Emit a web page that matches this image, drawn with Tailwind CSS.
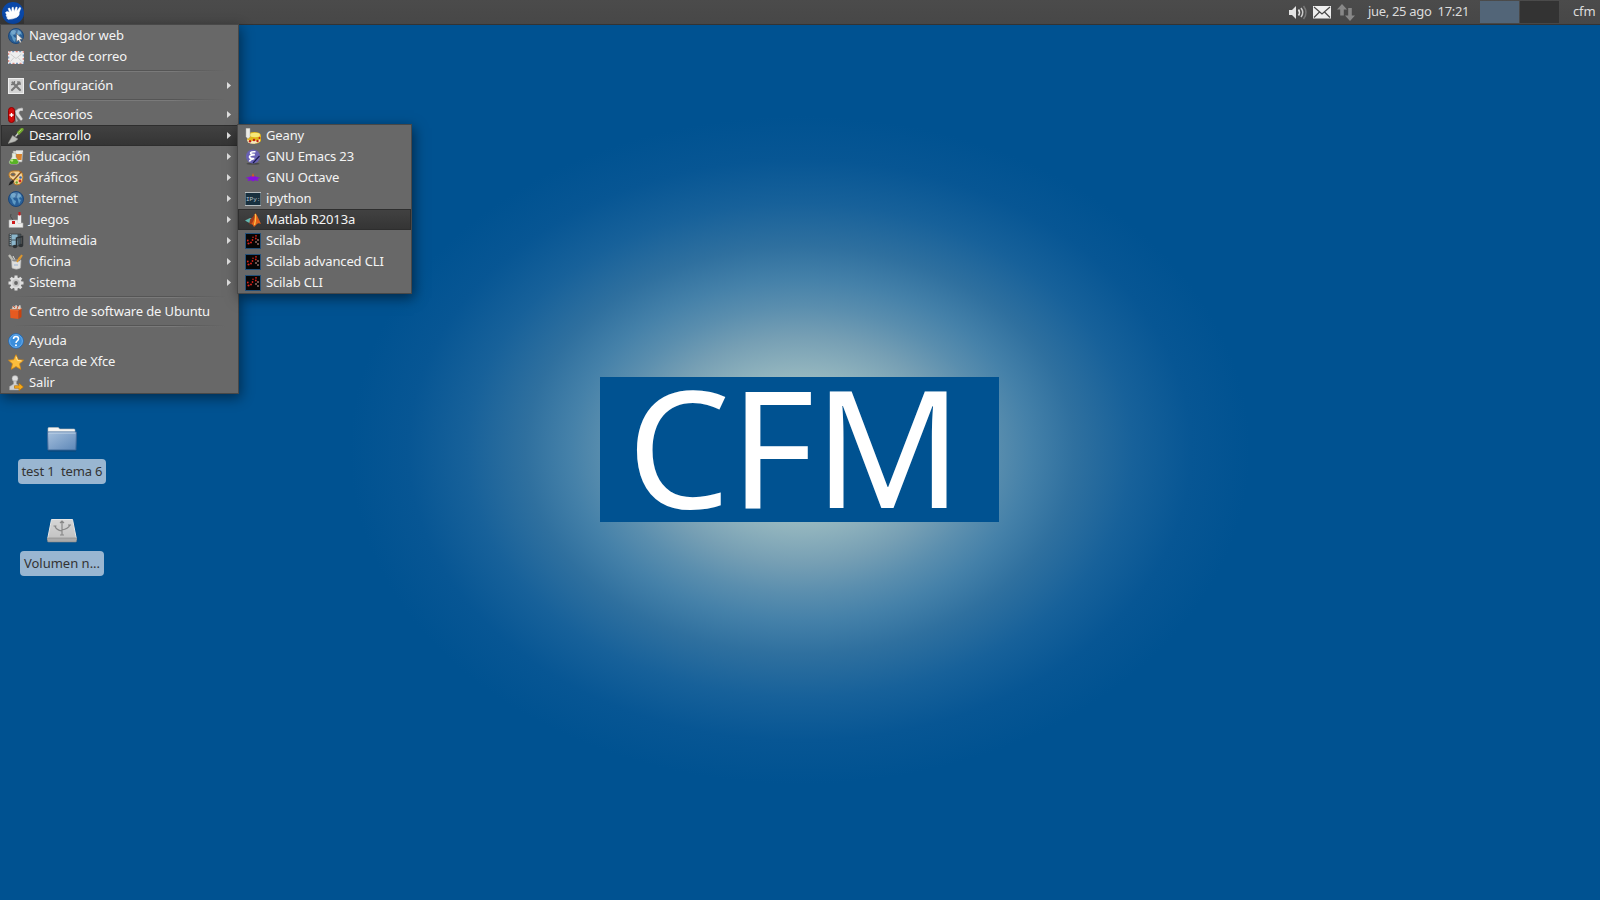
<!DOCTYPE html>
<html lang="es">
<head>
<meta charset="utf-8">
<title>Escritorio</title>
<script src="https://cdn.jsdelivr.net/npm/@tailwindcss/browser@4"></script>
</head>
<body class="relative h-[900px] w-[1600px] overflow-hidden bg-[#005291] font-['Noto_Sans','Open_Sans',sans-serif] text-[13px] tracking-[-0.14px] text-[#f4f4f4]">
<div class="absolute inset-0 bg-[radial-gradient(ellipse_450px_334px_at_800px_450px,#a6c2c2_0%,#98b9c0_21%,#769fb4_34%,#5a8eae_43%,#4581a9_51%,#2f709f_61%,#17619a_74%,#075694_87%,#005291_100%)]"></div>
<main class="absolute left-[600px] top-[377px] h-[145px] w-[399px] bg-[#005291] text-white">
  <div class="absolute left-[27px] top-[-44px] whitespace-nowrap text-[163.500px] leading-[224px] tracking-[-0.6px]">CFM</div>
</main>

<!-- Iconos del escritorio -->
<section class="absolute left-0 top-[420px] flex w-[124px] flex-col items-center text-[#333]">
  <svg class="h-[36px] w-[32px]" viewBox="0 0 32 36"><defs><linearGradient id="fo" x1="0" y1="0" x2="1" y2="1"><stop stop-color="#a5bfdc"/><stop offset="1" stop-color="#5d87b8"/></linearGradient><linearGradient id="dr" x1="0" y1="0" x2="0" y2="1"><stop stop-color="#d6d6d6"/><stop offset="1" stop-color="#c2c2c2"/></linearGradient></defs><path d="M2 14V8.500q0-1 1-1h9q1 0 1.500 1.500h14.500q1 0 1 1V14z" fill="#f4f4f2" stroke="#bbb" stroke-width=".6"/><path d="M1.500 12h29l-.6 18H2z" fill="url(#fo)" stroke="#416a9b" stroke-width="1"/><path d="M2.500 13h27" stroke="#c4d5e8"/><path d="M2 31h28" stroke="#123d66" opacity=".6"/></svg>
  <div class="mt-[3px] flex h-[25px] w-[88px] items-center justify-center whitespace-pre rounded-[4px] bg-[#99b6d1]">test 1  tema 6</div>
  <svg class="mt-[31px] h-[36px] w-[32px]" viewBox="0 0 32 36"><path d="M5.500 4.500h21l4 20H1.500z" fill="url(#dr)" stroke="#e6e6e6"/><path d="M1.500 23h29v3q0 1-1 1h-27q-1 0-1-1z" fill="#aaa" stroke="#888" stroke-width=".6"/><g fill="none" stroke="#888" stroke-width="1.200"><path d="M16 20V7M16 16q-6-1-7-5M16 15q6-1 8-5M14 8l2-2 2 2M14 20h4M7.500 11h3M22 10h3"/></g></svg>
  <div class="flex h-[25px] w-[84px] items-center justify-center rounded-[4px] bg-[#99b6d1] tracking-normal">Volumen n...</div>
</section>

<!-- Panel superior -->
<header class="absolute inset-x-0 top-0 flex h-[25px] items-start border-b border-[#333] bg-linear-to-b from-[#4b4b4b] to-[#474747] text-[#dcdcdc]">
  <div class="flex h-6 w-6 items-center justify-center bg-[#383838]"><svg class="ml-[2px] mt-[2px] h-[22px] w-[22px]" viewBox="0 0 22 22"><circle cx="11" cy="11" r="11" fill="#0a48a8"/><path d="M3.500 10.500L5 9.500l2.500.8L6.200 6.500 7.500 6l2.300 4L10 5.500l1.300-.3.900 4.300L14 5l1.200.3L14.800 9l3-3.800 1 .8-1.600 4.500Q18 13.500 14.500 15.500 10 17.500 6 17.300L4.800 16l.7-1-1.500-1 .6-1.200z" fill="#fff" stroke="#fff" stroke-width=".5" stroke-linejoin="round"/></svg></div>
  <div class="flex-1"></div>
  <svg class="mt-[4px] h-[17px] w-[68px]" viewBox="0 0 68 17"><path d="M1 6h3l4-4v13l-4-4H1z" fill="#e4e4e4"/><g fill="none" stroke-width="1.600"><path d="M10.500 5.500q2 3 0 6" stroke="#e4e4e4"/><path d="M13 4q3.500 4.500 0 9" stroke="#ccc"/><path d="M15.500 2q5 6.500 0 13" stroke="#777"/></g><rect x="25" y="2" width="18" height="12.500" fill="#eee"/><path d="M26 3l8 7 8-7M26 13.500l5.500-5.500M42 13.500l-5.500-5.500" fill="none" stroke="#484848" stroke-width="1.200"/><path d="M54 0l5 5.500h-3.200v6h-3.600v-6H49zM62 17l5-5.500h-3.200V4h-3.600v7.500H57z" fill="#888"/></svg>
  <div class="ml-[12px] h-[23px] w-[112px] whitespace-pre leading-[23px] tracking-[-0.32px]">jue, 25 ago  17:21</div>
  <div class="mt-px h-[22px] w-[39px] bg-[#526578]"></div><div class="ml-px mt-px h-[22px] w-[39px] bg-[#333]"></div>
  <div class="ml-[14px] w-[27px] leading-[23px]">cfm</div>
</header>

<!-- Menú principal -->
<nav id="menu" class="absolute left-0 top-6 w-[239px] border border-[#484848] bg-[#686868] shadow-[2px_4px_12px_rgba(0,0,0,0.45)]"></nav>
<nav id="submenu" class="absolute left-[237px] top-[124px] w-[175px] border border-[#484848] bg-[#686868] shadow-[2px_4px_12px_rgba(0,0,0,0.5)]"></nav>

<script>
const globe='<circle cx="8" cy="8" r="7.500" fill="#2a6098" stroke="#1c4677"/><path d="M3 3q3-2 5 0L7 6 5 7l1 2 2 1-1 4q-3-2-3-5L2 6zM10 2l3 2 1 3-2-1-1 2 2 1-2 4-1-4-1-3z" fill="#5f9ac4"/><ellipse cx="8" cy="4" rx="5" ry="3" fill="#fff" opacity=".14"/>';
const scilab='<rect x=".5" y=".5" width="15" height="15" fill="#050505" stroke="#245078"/><g fill="#d8221a"><circle cx="2.800" cy="7.500" r=".9"/><circle cx="3.500" cy="10.500" r="1.100"/><circle cx="6" cy="9.500" r="1"/><circle cx="7.500" cy="7" r=".9"/><circle cx="8" cy="4.200" r=".8"/><circle cx="11" cy="2.800" r=".9"/><circle cx="10.800" cy="5.500" r=".9"/></g><g fill="#f0b0a4"><circle cx="13" cy="7" r=".8"/><circle cx="11" cy="9" r=".8"/><circle cx="13" cy="11" r=".8"/></g>';
const I={
web:globe+'<path d="M8.500 5.500v8.500l2-2 1.500 3 1.500-.7-1.500-3h2.800z" fill="#eee" stroke="#555" stroke-width=".5"/>',
mail:'<rect x=".7" y="2.700" width="14.600" height="11.600" fill="#eee" stroke="#fff"/><rect x=".7" y="2.700" width="14.600" height="11.600" fill="none" stroke="#d98880" stroke-width="1.200" stroke-dasharray="2 5"/><rect x=".7" y="2.700" width="14.600" height="11.600" fill="none" stroke="#7b96bc" stroke-width="1.200" stroke-dasharray="2 5" stroke-dashoffset="3.500"/><path d="M2.500 5L8 9.500 13.500 5M2.500 12.500L6 8.500M13.500 12.500L10 8.500" fill="none" stroke="#c4c4c4" stroke-width=".8"/>',
config:'<rect x=".5" y=".5" width="15" height="15" fill="#d4d4d4" stroke="#eee"/><path d="M4.500 4.500L12 12M11.500 4.500L4 12" stroke="#777" stroke-width="2.200" stroke-linecap="round"/><path d="M3 6.500l3.300-.2.200-3.300M10 3v3h3" stroke="#777" stroke-width="1.300" fill="none"/>',
acc:'<path d="M7 4q4-4 8-3v3h-3l-1 2 4 6-2 2-5-6z" fill="#dedede" stroke="#777" stroke-width=".5"/><path d="M7 8l3 6-2 1z" fill="#aaa"/><rect x=".5" y=".5" width="6" height="15" rx="3" fill="#d40b0b" stroke="#8e0000"/><path d="M3.500 6v4M1.500 8h4" stroke="#fff" stroke-width="1.300"/>',
dev:'<path d="M10.500 5L14 1.500" stroke="#73a82f" stroke-width="3.200" stroke-linecap="round"/><path d="M10.500 4.500L13.500 1.500" stroke="#aad568"/><path d="M7.500 8.500l2.500-3" stroke="#ccc" stroke-width="1.300"/><path d="M4.500 7.500l5.500 3.500-3 2.500L0 15.500z" fill="#bbbcb8" stroke="#8a8a86" stroke-width=".5"/>',
edu:'<path d="M5 2h10l-1 11H6z" fill="#e9e9e4" stroke="#999" stroke-width=".6"/><path d="M8 5h6l-.5 6H8z" fill="#d9822b"/><path d="M8 2h7" stroke="#fff"/><path d="M4 4h4v4l3 5q0 2-2 2.300H3Q1 15 1 13l3-5z" fill="#e6eee0" stroke="#888" stroke-width=".5"/><path d="M3.500 10h5l2 3q0 2-2 2h-5q-2 0-2-2z" fill="#58b226"/><circle cx="4" cy="11.500" r="1.200" fill="#b5e77c"/>',
gfx:'<path d="M1 5q0-4 5-4h5q4 1 4 6t-3 7q-5 2-6-1 0-3-2-4-3-1-3-4z" fill="#f3d49c" stroke="#c07a1e"/><ellipse cx="5" cy="4.500" rx="2.400" ry="1.700" fill="#686868" stroke="#c07a1e" stroke-width=".7"/><circle cx="12.500" cy="7.500" r="1.300" fill="#3668ad"/><circle cx="12" cy="11" r="1.400" fill="#cf2b22"/><circle cx="8.700" cy="12.500" r="1.200" fill="#68a32d"/><circle cx="9" cy="9.500" r="1" fill="#e3d220"/><path d="M4.500 11.500L13.500 1.500" stroke="#8a5626" stroke-width="1.400"/><path d="M5 10l-3 2-1.500 3.500 3.500-1.500 2-2.500z" fill="#222"/>',
net:globe,
games:'<path d="M1 8h9v3h5v4.500H1z" fill="#ececea" stroke="#aaa" stroke-width=".6"/><path d="M11.500 11V3" stroke="#eee" stroke-width="3.400"/><rect x="10.500" y="0" width="2" height="3.500" fill="#cf1919"/><rect x="4" y="9" width="3" height="3" fill="#cf1919"/><path d="M5 8Q1 4 3 2" stroke="#444" stroke-width=".8" fill="none"/>',
media:'<path d="M1 1h12v12H1z" fill="#45535b" stroke="#333" stroke-width=".6"/><path d="M3.500 1.500h6v5h-6zM3.500 7.500h6v5h-6z" fill="#8db7cc"/><path d="M2.300 1v12" stroke="#a7b6ba" stroke-dasharray="1 1"/><path d="M8.500 13V5l6-1.500V12" fill="none" stroke="#2e3235" stroke-width="1.500"/><ellipse cx="7" cy="13.500" rx="2.200" ry="1.700" fill="#2e3235"/><ellipse cx="13" cy="12.500" rx="2.200" ry="1.700" fill="#2e3235"/>',
office:'<path d="M1 1l6 8" stroke="#bcbcb5" stroke-width="2.300"/><path d="M14 1L9 9" stroke="#dc962d" stroke-width="2"/><path d="M5 2l3 6" stroke="#ddd"/><path d="M3.500 6h9.500l-.5 8q-4 2.500-8.500 0z" fill="#dededc" stroke="#aaa" stroke-width=".6"/><ellipse cx="8.200" cy="6.500" rx="4" ry="1" fill="#888"/><path d="M9 8l3-5" stroke="#dc962d" stroke-width="1.600"/><path d="M6 10h4v2H6z" fill="#bcc7d5"/>',
system:'<g stroke="#dedede" stroke-width="3"><path d="M8 .5v15M.5 8h15M2.700 2.700l10.600 10.600M13.300 2.700L2.700 13.300"/></g><circle cx="8" cy="8" r="5.700" fill="#dedede"/><circle cx="8" cy="8" r="3.700" fill="#c4c4c4"/><circle cx="8" cy="8" r="1.900" fill="#666"/>',
ubuntu:'<path d="M4 5l1-3 2 1 1-2 2 2 2-2 1 4" fill="#d9cfc4" stroke="#bbb" stroke-width=".7"/><path d="M5 2l2 2M10 2l-1 3" stroke="#db5a35"/><path d="M2 5.500l8.500.5V15L2.500 14z" fill="#e65a20"/><path d="M10.500 6L13.500 4.500V13l-3 2z" fill="#c8420f"/><path d="M2 5.500l8.500.5 3-1.500" fill="none" stroke="#f58b51" stroke-width=".7"/>',
help:'<circle cx="8" cy="8" r="7.300" fill="#3b8edb" stroke="#236bb5"/><circle cx="8" cy="8" r="6.400" fill="none" stroke="#81baf0" stroke-width=".7"/><path d="M5.500 6q0-2.500 2.500-2.500T10.500 6q0 1-1.300 1.800Q8 8.500 8 10" stroke="#fff" stroke-width="1.500" fill="none"/><circle cx="8" cy="12.300" r="1" fill="#fff"/>',
star:'<path d="M8 .7l2.300 5 5.200.5-4 3.600 1.200 5.500L8 12.500l-4.700 2.800 1.200-5.500-4-3.600 5.200-.5z" fill="#fcbd3c" stroke="#d98a12" stroke-width=".8"/><path d="M8 2.500l1.600 4 4 .4" fill="none" stroke="#ffe49a"/>',
exit:'<circle cx="7" cy="3.500" r="3" fill="#dedede" stroke="#999" stroke-width=".5"/><path d="M5.500 6h3v3l3 1.500V15H1.500v-3.500L5.500 9z" fill="#cfcfcf" stroke="#999" stroke-width=".5"/><path d="M6.500 10.700H11V8L15.500 12 11 15.700v-2.400H6.500z" fill="#f5a817" stroke="#a86808" stroke-width=".6"/>',
geany:'<path d="M3 8q0-4 6-4 7 0 7 4v5q-2 3-8 2.500Q2 15 2 11z" fill="#e0b51a"/><ellipse cx="10" cy="7" rx="5" ry="2.200" fill="#f7e878"/><path d="M1 .3h4v8.500l-2 2-2-2z" fill="#ecece6" stroke="#aaa" stroke-width=".5"/><path d="M2 11.500q6 3 13 0v2q-6 4-12 1z" fill="#f6e8c0"/><g fill="#c22315"><circle cx="5" cy="13.300" r="1.200"/><circle cx="9" cy="12" r="1.200"/><circle cx="12.500" cy="13" r="1.200"/><circle cx="14.500" cy="10" r="1"/></g>',
emacs:'<ellipse cx="8" cy="14.800" rx="6.500" ry="1" fill="#333" opacity=".6"/><circle cx="8" cy="7.500" r="7" fill="#6961b4"/><path d="M10.500 2.800q-5-.3-5 1.200 0 1.300 4.300 1.600-5.600.4-5.300 2.400.3 1.700 4.800 1.500-4 .8-5 3" fill="none" stroke="#fff" stroke-width="1.600"/><path d="M14.500 7l-6.500 7" stroke="#1a1a4a" stroke-width="1.200"/>',
octave:'<path d="M.3 8l5.200-1.400Q8 4.500 10.500 6.600L15.700 8l-3.500.8 1.300 2.200-3.700-.8L8 11.500l-1.800-1.300L2.500 11 3.800 8.800z" fill="#8411dc"/><path d="M6.500 6.500L8 3l1.500 3.500z" fill="#d35c22"/>',
ipy:'<rect x=".5" y="1.500" width="15" height="13" fill="#18303f" stroke="#5d6f78"/><path d="M0 1.500h16M0 14.500h16" stroke="#b6bcbf"/><text x="1" y="9.500" font-size="6" letter-spacing="0" font-family="Liberation Mono,monospace" fill="#bcc9d0">IPy:</text>',
matlab:'<path d="M0 8.500L5 6l3 .5-3.500 4.500-2-1z" fill="#63b8b0"/><path d="M5 7.500Q8 5.500 10.500 1L9 11l-4.500 1.500 0-1.500z" fill="#a03a1a"/><path d="M10.500 1q2 3 5.500 11-2.500-1.500-4 0L9 15q-1-3-3-3 3-2 4.500-11z" fill="#e2601a"/><path d="M10.300 2q.8 5-.8 11" stroke="#ffbf48" stroke-width="1.300" fill="none"/>',
sci:scilab};
const row=(k,t,arrow,on)=>`<div class="flex h-[21px] items-center pl-[7px] ${on?'bg-linear-to-b from-[#424242] to-[#343434] shadow-[inset_0_0_0_1px_#2e2e2e]':''}"><svg class="h-4 w-4 shrink-0" viewBox="0 0 16 16">${I[k]}</svg><span class="ml-[5px] flex-1 whitespace-nowrap leading-[21px]">${t}</span>${arrow?'<svg class="mr-[7.5px] h-[7px] w-[4px]" viewBox="0 0 4 7"><path d="M0 0L4 3.500 0 7z" fill="#dedede"/></svg>':''}</div>`;
const sep='<div class="flex h-2 items-center px-[12px]"><div class="h-[2px] w-full bg-[linear-gradient(to_right,transparent,#555_25%,#555_75%,transparent)]"><div class="h-px translate-y-px bg-[linear-gradient(to_right,transparent,#7a7a7a_25%,#7a7a7a_75%,transparent)]"></div></div></div>';
document.getElementById('menu').innerHTML=row('web','Navegador web')+row('mail','Lector de correo')+sep+row('config','Configuración',1)+sep+row('acc','Accesorios',1)+row('dev','Desarrollo',1,1)+row('edu','Educación',1)+row('gfx','Gráficos',1)+row('net','Internet',1)+row('games','Juegos',1)+row('media','Multimedia',1)+row('office','Oficina',1)+row('system','Sistema',1)+sep+row('ubuntu','Centro de software de Ubuntu')+sep+row('help','Ayuda')+row('star','Acerca de Xfce')+row('exit','Salir');
document.getElementById('submenu').innerHTML=row('geany','Geany')+row('emacs','GNU Emacs 23')+row('octave','GNU Octave')+row('ipy','ipython')+row('matlab','Matlab R2013a',0,1)+row('sci','Scilab')+row('sci','Scilab advanced CLI')+row('sci','Scilab CLI');
</script>
</body>
</html>
